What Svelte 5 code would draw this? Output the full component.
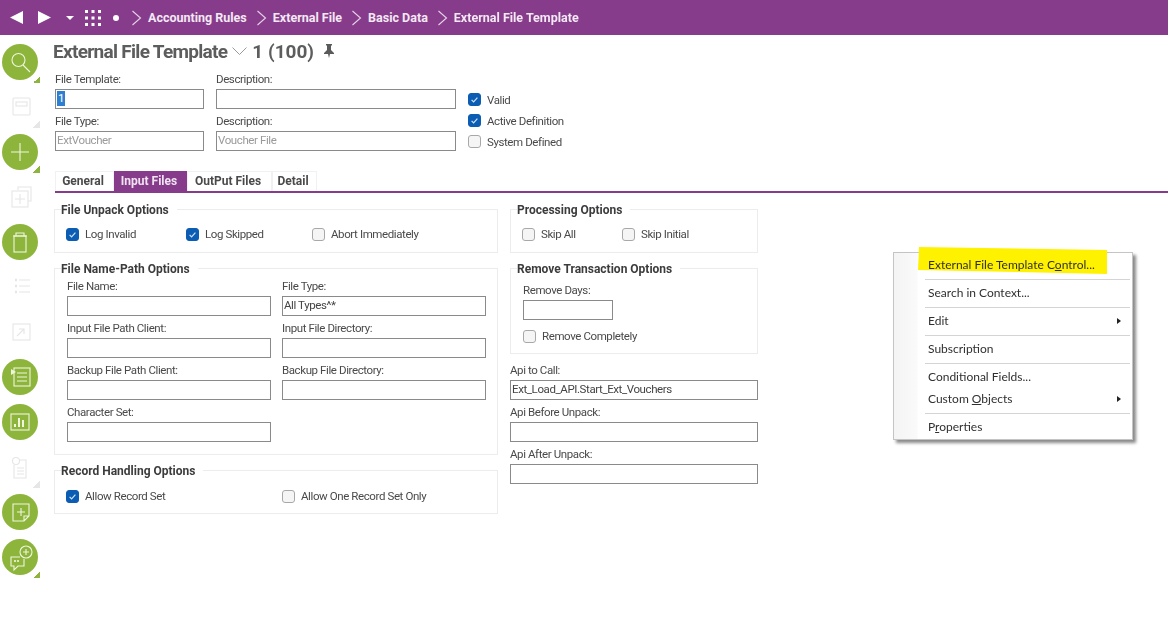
<script>
  const crumbs = ["Accounting Rules", "External File", "Basic Data", "External File Template"];
  const tabs = ["General", "Input Files", "OutPut Files", "Detail"];
  const activeTab = "Input Files";

  // one slot per 45px of the left rail
  const rail = [
    { icon: "search", on: true, corner: true },
    { icon: "save", on: false, corner: true },
    { icon: "plus", on: true, corner: true },
    { icon: "copy", on: false },
    { icon: "trash", on: true },
    { icon: "list", on: false },
    { icon: "open", on: false },
    { icon: "doc", on: true },
    { icon: "chart", on: true },
    { icon: "info", on: false, corner: true },
    { icon: "note", on: true },
    { icon: "chat", on: true, corner: true }
  ];

  const nameFields = [
    { label: "File Name:", value: "" },
    { label: "File Type:", value: "All Types^*" },
    { label: "Input File Path Client:", value: "" },
    { label: "Input File Directory:", value: "" },
    { label: "Backup File Path Client:", value: "" },
    { label: "Backup File Directory:", value: "" },
    { label: "Character Set:", value: "" }
  ];

  const apiFields = [
    { label: "Api to Call:", value: "Ext_Load_API.Start_Ext_Vouchers" },
    { label: "Api Before Unpack:", value: "" },
    { label: "Api After Unpack:", value: "" }
  ];
</script>

{#snippet check(label, checked = false)}
  <div class="check">
    <span class="box" class:checked>
      {#if checked}
        <svg viewBox="0 0 13 13" width="13" height="13"><path d="M3.6 6.8l2 2 3.8-4.2" fill="none" stroke="#cfe3f7" stroke-width="1.2" /></svg>
      {/if}
    </span>
    <span>{label}</span>
  </div>
{/snippet}

{#snippet field(label, value = "", muted = false)}
  <div class="field">
    <div class="label">{label}</div>
    <div class="input" class:muted>{value}</div>
  </div>
{/snippet}

{#snippet chevron()}
  <svg class="crumb-sep" viewBox="0 0 11 16" width="11" height="16"><path d="M1.5 1l8 7-8 7" fill="none" stroke="#e6d3e8" stroke-width="1.1" /></svg>
{/snippet}

<div class="page">
  <header class="topbar">
    <svg class="nav" viewBox="0 0 13 13" width="13" height="13"><path d="M13 0v13L0 6.5z" /></svg>
    <svg class="nav fwd" viewBox="0 0 13 13" width="13" height="13"><path d="M0 0v13l13-6.5z" /></svg>
    <svg class="nav drop" viewBox="0 0 8 4" width="8" height="4"><path d="M0 0h8L4 4z" /></svg>
    <svg class="nav apps" viewBox="0 0 16 16" width="16" height="16">
      {#each [1.5, 8, 14.5] as y}
        {#each [1.5, 8, 14.5] as x}
          <rect x={x - 1.5} y={y - 1.5} width="3" height="3" />
        {/each}
      {/each}
    </svg>
    <span class="dot"></span>
    {#each crumbs as crumb}
      {@render chevron()}
      <span class="crumb">{crumb}</span>
    {/each}
  </header>

  <div class="body">
    <nav class="rail">
      {#each rail as item}
        <div class="slot">
          <span class="round" class:on={item.on}>
            <svg viewBox="0 0 36 36" width="36" height="36" fill="none" stroke="currentColor" stroke-width="1.1">
              {#if item.icon === "search"}
                <circle cx="16.5" cy="16" r="6.5" /><path d="M21 21l7 7" />
              {:else if item.icon === "save"}
                <rect x="11" y="9" width="17" height="17" rx="1" /><rect x="14" y="13" width="11" height="4" />
              {:else if item.icon === "plus"}
                <path d="M18 9v18M9 18h18" />
              {:else if item.icon === "copy"}
                <path d="M16 11v-3h13v14h-3" /><rect x="10" y="12" width="16" height="16" /><path d="M18 15v10M13 20h10" />
              {:else if item.icon === "trash"}
                <rect x="12" y="12" width="12" height="16" /><path d="M14 12v-3h8v3M11 12h14" />
              {:else if item.icon === "list"}
                <path d="M17 11h11M17 17h11M17 23h11" /><path d="M13 11h2M13 17h2M13 23h2" stroke-width="2.4" />
              {:else if item.icon === "open"}
                <rect x="11" y="10" width="17" height="16" /><path d="M15 22l7-7M17 15h5v5" />
              {:else if item.icon === "doc"}
                <rect x="12" y="9" width="16" height="18" /><path d="M15 14h10M15 18h10M15 22h10" />
                <path d="M9 10l5 3-5 3z" fill="currentColor" stroke="none" />
              {:else if item.icon === "chart"}
                <rect x="9" y="10" width="18" height="16" /><path d="M13 23v-3M17 23v-9M21 23v-7" stroke-width="2" />
              {:else if item.icon === "info"}
                <circle cx="14" cy="12" r="3.5" /><path d="M17 11h7v18h-12v-13M15 19h7M15 22h7M15 25h7" />
              {:else if item.icon === "note"}
                <path d="M11 10h16v12l-5 5h-11zM27 22h-5v5M19 14v8M15 18h8" />
              {:else}
                <circle cx="24" cy="13" r="6" /><path d="M24 10v6M21 13h6" />
                <path d="M18 18h-9v9h3v4l4-4h6v-7" /><path d="M13 21v2M16 21v2" stroke-width="1.6" />
              {/if}
            </svg>
          </span>
          {#if item.corner}
            <span class="corner" class:on={item.on}></span>
          {/if}
        </div>
      {/each}
    </nav>

    <main class="main">
      <div class="title">
        <span class="title-name">External File Template</span>
        <svg viewBox="0 0 15 8" width="15" height="8"><path d="M.5.5l7 7 7-7" fill="none" stroke="#9a9a9a" /></svg>
        <span>1 (100)</span>
        <svg class="pin" viewBox="0 0 12 16" width="12" height="16"><path d="M3 1h6v1l-1 1v4l3 3v1H7l-1 4-1-4H1v-1l3-3V3L3 2z" fill="#5a5a5a" /></svg>
      </div>

      <div class="head-form">
        <div class="field">
          <div class="label">File Template:</div>
          <div class="input"><span class="selected">1</span></div>
        </div>
        {@render field("Description:")}
        <div class="head-checks">
          {@render check("Valid", true)}
          {@render check("Active Definition", true)}
          {@render check("System Defined")}
        </div>
        {@render field("File Type:", "ExtVoucher", true)}
        {@render field("Description:", "Voucher File", true)}
      </div>

      <div class="tabs">
        {#each tabs as tab}
          <span class="tab" class:active={tab === activeTab}>{tab}</span>
        {/each}
      </div>

      <div class="panels">
        <div class="col left">
          <section class="group">
            <div class="legend">File Unpack Options</div>
            <div class="check-row unpack">
              {@render check("Log Invalid", true)}
              {@render check("Log Skipped", true)}
              {@render check("Abort Immediately")}
            </div>
          </section>

          <section class="group">
            <div class="legend">File Name-Path Options</div>
            <div class="name-grid">
              {#each nameFields as f}
                {@render field(f.label, f.value)}
              {/each}
            </div>
          </section>

          <section class="group">
            <div class="legend">Record Handling Options</div>
            <div class="check-row record">
              {@render check("Allow Record Set", true)}
              {@render check("Allow One Record Set Only")}
            </div>
          </section>
        </div>

        <div class="col right">
          <section class="group">
            <div class="legend">Processing Options</div>
            <div class="check-row processing">
              {@render check("Skip All")}
              {@render check("Skip Initial")}
            </div>
          </section>

          <section class="group remove">
            <div class="legend">Remove Transaction Options</div>
            <div class="days">{@render field("Remove Days:")}</div>
            {@render check("Remove Completely")}
          </section>

          <div class="api">
            {#each apiFields as f}
              {@render field(f.label, f.value)}
            {/each}
          </div>
        </div>
      </div>
    </main>
  </div>

  <div class="menu">
    <svg class="marker" viewBox="0 0 190 27" width="190" height="27"><path d="M1 0l188 3v24L0 23z" fill="#fff200" /></svg>
    <div class="item">External File Template C<u>o</u>ntrol...</div>
    <hr />
    <div class="item">Search in Context...</div>
    <hr />
    <div class="item">Edit<span class="more"></span></div>
    <hr />
    <div class="item">Subscription</div>
    <hr />
    <div class="item">Conditional Fields...</div>
    <div class="item">Custom <u>O</u>bjects<span class="more"></span></div>
    <hr />
    <div class="item">P<u>r</u>operties</div>
  </div>
</div>

<style>
  :global(body) {
    margin: 0;
    background: #fff;
  }
  .page {
    position: relative;
    width: 1168px;
    height: 633px;
    overflow: hidden;
    font-family: Roboto, "Liberation Sans", sans-serif;
    font-size: 11.5px;
    letter-spacing: -0.4px;
    color: #4a4a4a;
    filter: blur(0.35px);
  }

  .topbar {
    height: 35px;
    background: #873c8b;
    display: flex;
    align-items: center;
    padding-left: 10px;
    color: #f3e8f4;
    box-sizing: border-box;
    letter-spacing: 0;
  }
  .nav {
    fill: #fff;
    flex: none;
  }
  .fwd {
    margin-left: 15px;
  }
  .drop {
    margin-left: 15px;
  }
  .apps {
    margin-left: 11px;
  }
  .dot {
    width: 6px;
    height: 6px;
    border-radius: 50%;
    background: #fff;
    margin: 0 12px 0 12px;
  }
  .crumb-sep {
    flex: none;
    margin-right: 6px;
  }
  .crumb {
    font-weight: 700;
    font-size: 12.5px;
    margin-right: 9px;
    white-space: nowrap;
  }

  .body {
    display: flex;
  }
  .rail {
    width: 40px;
    flex: none;
    padding-top: 4px;
  }
  .slot {
    position: relative;
    height: 45px;
    display: flex;
    align-items: center;
    padding-left: 2px;
  }
  .round {
    width: 36px;
    height: 36px;
    border-radius: 50%;
    color: #e6e6e6;
    display: block;
  }
  .round.on {
    background: #8db53c;
    color: #eef5dc;
  }
  .round svg {
    display: block;
  }
  .corner {
    position: absolute;
    right: 0;
    bottom: 1px;
    width: 7px;
    height: 7px;
    background: linear-gradient(135deg, transparent 50%, #e6e6e6 50%);
  }
  .corner.on {
    background: linear-gradient(135deg, transparent 50%, #8db53c 50%);
  }

  .main {
    flex: 1;
    padding-left: 15px;
    min-width: 0;
  }
  .title {
    height: 36px;
    display: flex;
    align-items: center;
    gap: 5px;
    font-weight: 700;
    font-size: 19px;
    letter-spacing: 0;
    color: #5d5d5d;
    margin: -2px 0 2px -2px;
  }
  .title > span {
    white-space: nowrap;
  }
  .title-name {
    letter-spacing: -0.7px;
  }
  .pin {
    margin-left: 4px;
  }

  .head-form {
    display: grid;
    grid-template-columns: 149px 240px auto;
    column-gap: 12px;
    row-gap: 4px;
    width: 620px;
  }
  .head-checks {
    grid-row: 1 / span 2;
    grid-column: 3;
    height: 80px;
    box-sizing: border-box;
    padding-top: 18px;
  }
  .head-checks .check {
    height: 21px;
  }

  .field {
    min-width: 0;
  }
  .label {
    height: 18px;
    line-height: 16px;
    white-space: nowrap;
  }
  .input {
    height: 20px;
    box-sizing: border-box;
    border: 1px solid #8a8a8a;
    line-height: 17px;
    padding-left: 1px;
    color: #444;
    white-space: nowrap;
    overflow: hidden;
  }
  .input.muted {
    color: #9a9a9a;
  }
  .selected {
    display: inline-block;
    background: #2f7fd0;
    color: #fff;
    padding: 0 1px;
    height: 15px;
    line-height: 15px;
    margin-top: 1px;
    vertical-align: top;
  }

  .check {
    display: flex;
    align-items: center;
    gap: 6px;
    height: 20px;
    white-space: nowrap;
  }
  .box {
    width: 13px;
    height: 13px;
    box-sizing: border-box;
    border: 1px solid #a8a8a8;
    border-radius: 3px;
    background: #f5f5f5;
    flex: none;
  }
  .box.checked {
    background: #0b5cb3;
    border-color: #0b5cb3;
  }
  .box svg {
    display: block;
    margin: -1px;
  }

  .tabs {
    display: grid;
    grid-template-columns: 59px 73px 85px 45px 1fr;
    height: 22px;
    box-sizing: border-box;
    margin-top: 20px;
    border-bottom: 2px solid #873c8b;
  }
  .tab {
    height: 20px;
    line-height: 19px;
    text-align: center;
    box-sizing: border-box;
    padding-right: 3px;
    font-weight: 700;
    font-size: 12px;
    letter-spacing: 0;
    color: #4a4a4a;
    border: 1px solid #f1f1f1;
    border-bottom: 0;
    white-space: nowrap;
  }
  .tab.active {
    background: #873c8b;
    border-color: #873c8b;
    color: #f0e3f1;
  }

  .panels {
    display: grid;
    grid-template-columns: 444px 248px;
    column-gap: 12px;
    margin-top: 16px;
    margin-left: -1px;
  }
  .col {
    display: flex;
    flex-direction: column;
  }
  .group {
    border: 1px solid #ececec;
    padding: 0 12px;
    box-sizing: border-box;
  }
  .col .group + .group {
    margin-top: 15px;
  }
  .legend {
    width: fit-content;
    height: 15px;
    line-height: 15px;
    margin: -7px 0 0 -6px;
    padding-right: 8px;
    background: #fff;
    font-size: 12px;
    font-weight: 700;
    letter-spacing: 0;
    color: #3c3c3c;
    white-space: nowrap;
  }

  .check-row {
    display: grid;
    margin: 6px 0 8px -1px;
  }
  .unpack {
    grid-template-columns: 120px 126px auto;
  }
  .record {
    grid-template-columns: 216px auto;
    margin: 7px 0 7px -1px;
  }
  .processing {
    grid-template-columns: 100px auto;
  }

  .name-grid {
    display: grid;
    grid-template-columns: 204px 204px;
    column-gap: 11px;
    row-gap: 4px;
    margin-top: 1px;
    padding-bottom: 12px;
  }
  .days {
    width: 90px;
    margin: 5px 0 6px;
  }
  .remove {
    padding-bottom: 7px;
  }
  .api {
    display: grid;
    row-gap: 4px;
    margin-top: 8px;
  }

  .menu {
    position: absolute;
    left: 893px;
    top: 252px;
    width: 240px;
    height: 188px;
    box-sizing: border-box;
    padding-top: 1px;
    border: 1px solid #c4c4c4;
    background: linear-gradient(90deg, #f4f4f4 0, #fafafa 23px, #fff 24px);
    box-shadow: 3px 3px 3px #8a8a8a;
    font-family: Lato, sans-serif;
    font-size: 12px;
    letter-spacing: 0;
    color: #303030;
  }
  .marker {
    position: absolute;
    left: 24px;
    top: -6px;
  }
  .item {
    position: relative;
    height: 22px;
    line-height: 22px;
    padding-left: 34px;
    white-space: nowrap;
  }
  .more {
    position: absolute;
    right: 11px;
    top: 8px;
    border-left: 4px solid #222;
    border-top: 3px solid transparent;
    border-bottom: 3px solid transparent;
  }
  hr {
    height: 1px;
    border: 0;
    background: #d4d4d4;
    margin: 3px 2px 2px 31px;
  }
</style>
